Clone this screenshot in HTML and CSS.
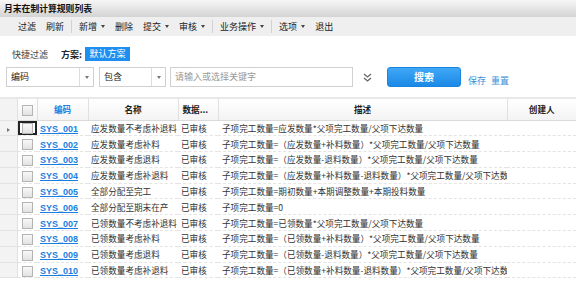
FILE: index.html
```html
<!DOCTYPE html>
<html lang="zh-CN">
<head>
    <meta charset="UTF-8">
    <title>月末在制计算规则列表</title>
    <link rel="stylesheet" href="styles.css">
</head>
<body>
    <div class="titlebar">月末在制计算规则列表</div>

    <div class="toolbar">
        <span class="tool">过滤</span>
        <span class="tool">刷新</span>
        <span class="tool-sep"></span>
        <span class="tool">新增<i class="caret"></i></span>
        <span class="tool">删除</span>
        <span class="tool">提交<i class="caret"></i></span>
        <span class="tool">审核<i class="caret"></i></span>
        <span class="tool-sep"></span>
        <span class="tool">业务操作<i class="caret"></i></span>
        <span class="tool-sep"></span>
        <span class="tool">选项<i class="caret"></i></span>
        <span class="tool">退出</span>
    </div>

    <div class="filter">
        <div class="filter-top">
            <span class="quick">快捷过滤</span>
            <span class="scheme-label">方案:</span>
            <span class="scheme">默认方案</span>
        </div>
        <div class="filter-bar">
            <div class="select select-code">
                <span class="select-text">编码</span>
                <span class="select-arrow"><i class="caret caret-grey"></i></span>
            </div>
            <div class="select select-op">
                <span class="select-text">包含</span>
                <span class="select-arrow"><i class="caret caret-grey"></i></span>
            </div>
            <div class="keyword">请输入或选择关键字</div>
            <svg class="expand" width="9" height="9" viewBox="0 0 9 9">
                <polyline points="1,1 4.5,4 8,1" fill="none" stroke="#666" stroke-width="1.3"/>
                <polyline points="1,5 4.5,8 8,5" fill="none" stroke="#666" stroke-width="1.3"/>
            </svg>
            <div class="search-btn">搜索</div>
            <a class="link" href="#">保存</a>
            <a class="link" href="#">重置</a>
        </div>
    </div>

    <table class="grid">
        <colgroup>
            <col class="c-ind">
            <col class="c-chk">
            <col class="c-code">
            <col class="c-name">
            <col class="c-status">
            <col class="c-desc">
            <col class="c-user">
        </colgroup>
        <thead>
            <tr>
                <th class="ind"></th>
                <th><span class="chk"></span></th>
                <th class="th-code">编码</th>
                <th>名称</th>
                <th class="th-left">数据...</th>
                <th>描述</th>
                <th>创建人</th>
            </tr>
        </thead>
        <tbody>
            <tr>
                <td class="ind"><i class="arrow"></i></td>
                <td class="chk-cell focus"><span class="chk"></span></td>
                <td class="code"><a href="#">SYS_001</a></td>
                <td>应发数量不考虑补退料</td>
                <td>已审核</td>
                <td>子项完工数量=应发数量*父项完工数量/父项下达数量</td>
                <td></td>
            </tr>
            <tr>
                <td class="ind"></td>
                <td class="chk-cell"><span class="chk"></span></td>
                <td class="code"><a href="#">SYS_002</a></td>
                <td>应发数量考虑补料</td>
                <td>已审核</td>
                <td>子项完工数量=（应发数量+补料数量）*父项完工数量/父项下达数量</td>
                <td></td>
            </tr>
            <tr>
                <td class="ind"></td>
                <td class="chk-cell"><span class="chk"></span></td>
                <td class="code"><a href="#">SYS_003</a></td>
                <td>应发数量考虑退料</td>
                <td>已审核</td>
                <td>子项完工数量=（应发数量-退料数量）*父项完工数量/父项下达数量</td>
                <td></td>
            </tr>
            <tr>
                <td class="ind"></td>
                <td class="chk-cell"><span class="chk"></span></td>
                <td class="code"><a href="#">SYS_004</a></td>
                <td>应发数量考虑补退料</td>
                <td>已审核</td>
                <td>子项完工数量=（应发数量+补料数量-退料数量）*父项完工数量/父项下达数</td>
                <td></td>
            </tr>
            <tr>
                <td class="ind"></td>
                <td class="chk-cell"><span class="chk"></span></td>
                <td class="code"><a href="#">SYS_005</a></td>
                <td>全部分配至完工</td>
                <td>已审核</td>
                <td>子项完工数量=期初数量+本期调整数量+本期投料数量</td>
                <td></td>
            </tr>
            <tr>
                <td class="ind"></td>
                <td class="chk-cell"><span class="chk"></span></td>
                <td class="code"><a href="#">SYS_006</a></td>
                <td>全部分配至期末在产</td>
                <td>已审核</td>
                <td>子项完工数量=0</td>
                <td></td>
            </tr>
            <tr>
                <td class="ind"></td>
                <td class="chk-cell"><span class="chk"></span></td>
                <td class="code"><a href="#">SYS_007</a></td>
                <td>已领数量不考虑补退料</td>
                <td>已审核</td>
                <td>子项完工数量=已领数量*父项完工数量/父项下达数量</td>
                <td></td>
            </tr>
            <tr>
                <td class="ind"></td>
                <td class="chk-cell"><span class="chk"></span></td>
                <td class="code"><a href="#">SYS_008</a></td>
                <td>已领数量考虑补料</td>
                <td>已审核</td>
                <td>子项完工数量=（已领数量+补料数量）*父项完工数量/父项下达数量</td>
                <td></td>
            </tr>
            <tr>
                <td class="ind"></td>
                <td class="chk-cell"><span class="chk"></span></td>
                <td class="code"><a href="#">SYS_009</a></td>
                <td>已领数量考虑退料</td>
                <td>已审核</td>
                <td>子项完工数量=（已领数量-退料数量）*父项完工数量/父项下达数量</td>
                <td></td>
            </tr>
            <tr>
                <td class="ind"></td>
                <td class="chk-cell"><span class="chk"></span></td>
                <td class="code"><a href="#">SYS_010</a></td>
                <td>已领数量考虑补退料</td>
                <td>已审核</td>
                <td>子项完工数量=（已领数量+补料数量-退料数量）*父项完工数量/父项下达数</td>
                <td></td>
            </tr>
        </tbody>
    </table>
</body>
</html>
```

FILE: styles.css
```css
* {
    margin: 0;
    padding: 0;
    box-sizing: border-box;
}

body {
    font-family: "Noto Sans CJK SC", "Liberation Sans", sans-serif;
    font-size: 8.6px;
    color: #333;
    background: #fff;
    width: 576px;
    height: 282px;
    overflow: hidden;
}

.titlebar {
    height: 17px;
    line-height: 17px;
    padding-left: 4px;
    font-size: 8.8px;
    font-weight: bold;
    color: #111;
    background: linear-gradient(#f6f6f6, #d4d4d4);
}

.toolbar {
    height: 19px;
    display: flex;
    align-items: center;
    padding-left: 13px;
    font-size: 9px;
    background: #efefef;
    color: #222;
}

.tool {
    margin: 0 5px;
    display: flex;
    align-items: center;
}

.tool-sep {
    width: 1px;
    height: 13px;
    background: #d2d2d2;
    margin: 0 2px;
}

.caret {
    display: inline-block;
    margin-left: 4px;
    border-left: 2.5px solid transparent;
    border-right: 2.5px solid transparent;
    border-top: 3px solid #444;
}

.caret-grey {
    margin-left: 0;
    border-top-color: #777;
}

/* Quick filter */
.filter {
    padding: 11px 6px 10px;
    border-bottom: 2px solid #e8e8e8;
    font-size: 9px;
}

.filter-top {
    display: flex;
    align-items: center;
    height: 14px;
    padding-left: 6px;
}

.quick {
    margin-right: 13px;
    color: #444;
}

.scheme-label {
    font-weight: bold;
    color: #222;
    margin-right: 3px;
}

.scheme {
    background: #1e8ef0;
    color: #fff;
    line-height: 14px;
    padding: 0 4.5px;
}

.filter-bar {
    display: flex;
    align-items: center;
    height: 20px;
    margin-top: 6px;
}

.select {
    display: flex;
    height: 20px;
    border: 1px solid #d0d0d0;
}

.select-code {
    width: 88px;
}

.select-op {
    width: 67px;
    margin-left: 5px;
}

.select-text {
    flex: 1;
    padding-left: 4px;
    line-height: 18px;
    color: #222;
}

.select-arrow {
    width: 14px;
    border-left: 1px solid #ddd;
    display: flex;
    align-items: center;
    justify-content: center;
}

.keyword {
    width: 183px;
    height: 20px;
    margin-left: 4px;
    border: 1px solid #d0d0d0;
    padding-left: 4px;
    line-height: 18px;
    color: #999;
}

.expand {
    margin-left: 10px;
}

.search-btn {
    width: 74px;
    height: 20px;
    margin-left: 15px;
    border: 1px solid #1a84dc;
    border-radius: 3px;
    background: linear-gradient(#40a8f6, #1b88e6);
    color: #fff;
    font-weight: bold;
    font-size: 10px;
    line-height: 18px;
    text-align: center;
}

.link {
    align-self: flex-end;
    line-height: 12px;
    margin-left: 7px;
    color: #3b8fd9;
    text-decoration: none;
}

.link + .link {
    margin-left: 5px;
}

/* Grid */
.grid {
    width: 576px;
    table-layout: fixed;
    border-collapse: collapse;
}

.c-ind { width: 17px; }
.c-chk { width: 20px; }
.c-code { width: 51px; }
.c-name { width: 90px; }
.c-status { width: 40px; }
.c-desc { width: 289px; }
.c-user { width: 69px; }

.grid th {
    height: 21px;
    padding: 0;
    font-weight: bold;
    color: #222;
    text-align: center;
    background: linear-gradient(#fff, #f3f3f3);
    border-right: 1px solid #e0e0e0;
    border-bottom: 1px solid #dadada;
    white-space: nowrap;
    overflow: hidden;
}

.grid th:last-child {
    border-right: none;
}

.grid .th-code {
    color: #1a7fe0;
}

.grid .th-left {
    text-align: left;
    padding-left: 4px;
}

.grid td {
    height: 15.8px;
    padding: 0 0 0 4px;
    border-bottom: 1px dashed #e4e4e4;
    white-space: nowrap;
    overflow: hidden;
}

.grid td:nth-child(4),
.grid td:nth-child(5) {
    padding-left: 3px;
}

.grid .ind {
    padding: 0;
    background: #f3f3f3;
    border-right: 1px solid #e0e0e0;
    border-bottom: 1px solid #e2e2e2;
    text-align: center;
}

.arrow {
    display: inline-block;
    border-top: 2.5px solid transparent;
    border-bottom: 2.5px solid transparent;
    border-left: 3px solid #777;
    vertical-align: middle;
}

.grid .chk-cell {
    padding: 0;
    text-align: center;
}

.grid .focus {
    box-shadow: inset 0 0 0 2px #222;
}

.chk {
    display: inline-block;
    width: 11px;
    height: 11px;
    border: 1px solid #b4b4b4;
    background: linear-gradient(#f8f8f8, #e2e2e2);
    vertical-align: middle;
}

.grid .code {
    padding-left: 3px;
}

.code a {
    font-family: "Liberation Sans", sans-serif;
    font-size: 9px;
    font-weight: bold;
    color: #1a7fe0;
}
```
